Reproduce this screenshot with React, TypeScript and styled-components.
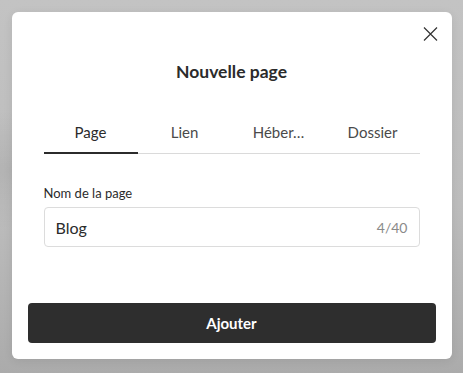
import * as React from 'react';
import styled, { createGlobalStyle } from 'styled-components';

const GlobalStyle = createGlobalStyle`
  html, body {
    margin: 0;
    padding: 0;
  }
  body {
    font-family: Lato, 'Noto Sans', sans-serif;
    color: #2b2b2b;
  }
`;

const Backdrop = styled.div`
  height: 373px;
  box-sizing: border-box;
  padding-top: 12px;
  display: flex;
  align-items: flex-start;
  justify-content: center;
  background:
    radial-gradient(ellipse 90px 60px at 10px 170px, rgba(0, 0, 0, 0.06), transparent),
    linear-gradient(180deg, #c3c3c3 0%, #bdbdbd 55%, #ababab 100%);
`;

const Modal = styled.div`
  position: relative;
  width: 440px;
  height: 347px;
  box-sizing: border-box;
  background: #fff;
  border-radius: 6px;
  display: flex;
  flex-direction: column;
  box-shadow: 0 2px 10px rgba(0, 0, 0, 0.08);
`;

const CloseButton = styled.button`
  position: absolute;
  top: 14px;
  right: 12px;
  width: 18px;
  height: 16px;
  padding: 0;
  border: none;
  background: none;
  display: flex;
  align-items: center;
  justify-content: center;
  cursor: pointer;
`;

const Body = styled.div`
  flex: 1;
  padding: 48px 32px 0;
`;

const Title = styled.h2`
  margin: 0 0 32px;
  font-size: 17.5px;
  line-height: 24px;
  font-weight: 700;
  text-align: center;
  color: #2b2b2b;
`;

const TabList = styled.div`
  display: grid;
  grid-template-columns: repeat(4, 1fr);
  border-bottom: 1px solid #dadada;
`;

const Tab = styled.button<{ $active?: boolean }>`
  margin-bottom: -1px;
  padding: 6px 4px 9px;
  border: none;
  border-bottom: 2.5px solid ${(p) => (p.$active ? '#2b2b2b' : 'transparent')};
  background: none;
  font-family: inherit;
  font-size: 15px;
  line-height: 21px;
  color: ${(p) => (p.$active ? '#2b2b2b' : '#4a4a4a')};
  white-space: nowrap;
  overflow: hidden;
  text-overflow: ellipsis;
  cursor: pointer;
`;

const Field = styled.div`
  margin-top: 30px;
  display: flex;
  flex-direction: column;
  gap: 5px;
`;

const Label = styled.label`
  font-size: 13px;
  line-height: 18px;
  color: #2b2b2b;
`;

const InputBox = styled.div`
  height: 40px;
  box-sizing: border-box;
  display: flex;
  align-items: center;
  padding: 0 11px;
  border: 1px solid #dcdcdc;
  border-radius: 4px;
`;

const Input = styled.input`
  flex: 1;
  min-width: 0;
  border: none;
  outline: none;
  padding: 0;
  font-family: inherit;
  font-size: 16px;
  color: #2b2b2b;
`;

const Counter = styled.span`
  font-size: 14px;
  color: #8a8a8a;
`;

const Footer = styled.div`
  padding: 16px;
`;

const SubmitButton = styled.button`
  width: 100%;
  height: 40px;
  border: none;
  border-radius: 4px;
  background: #2e2e2e;
  color: #fff;
  font-family: inherit;
  font-size: 15px;
  font-weight: 700;
  cursor: pointer;
`;

const tabs = ['Page', 'Lien', 'Hébergement', 'Dossier'];

export default function App() {
  const [active, setActive] = React.useState(0);
  const [name, setName] = React.useState('Blog');

  return (
    <>
      <GlobalStyle />
      <Backdrop>
        <Modal>
          <CloseButton aria-label='Fermer'>
            <svg width='15' height='14' viewBox='0 0 15 14' fill='none'>
              <path d='M1 0.5L14 13.5M14 0.5L1 13.5' stroke='#333' strokeWidth='1.2' />
            </svg>
          </CloseButton>
          <Body>
            <Title>Nouvelle page</Title>
            <TabList>
              {tabs.map((t, i) => (
                <Tab key={t} $active={i === active} onClick={() => setActive(i)}>
                  {t === 'Hébergement' ? 'Héber…' : t}
                </Tab>
              ))}
            </TabList>
            <Field>
              <Label htmlFor='page-name'>Nom de la page</Label>
              <InputBox>
                <Input
                  id='page-name'
                  value={name}
                  maxLength={40}
                  onChange={(e) => setName(e.target.value)}
                />
                <Counter>{`${name.length}/40`}</Counter>
              </InputBox>
            </Field>
          </Body>
          <Footer>
            <SubmitButton>Ajouter</SubmitButton>
          </Footer>
        </Modal>
      </Backdrop>
    </>
  );
}
